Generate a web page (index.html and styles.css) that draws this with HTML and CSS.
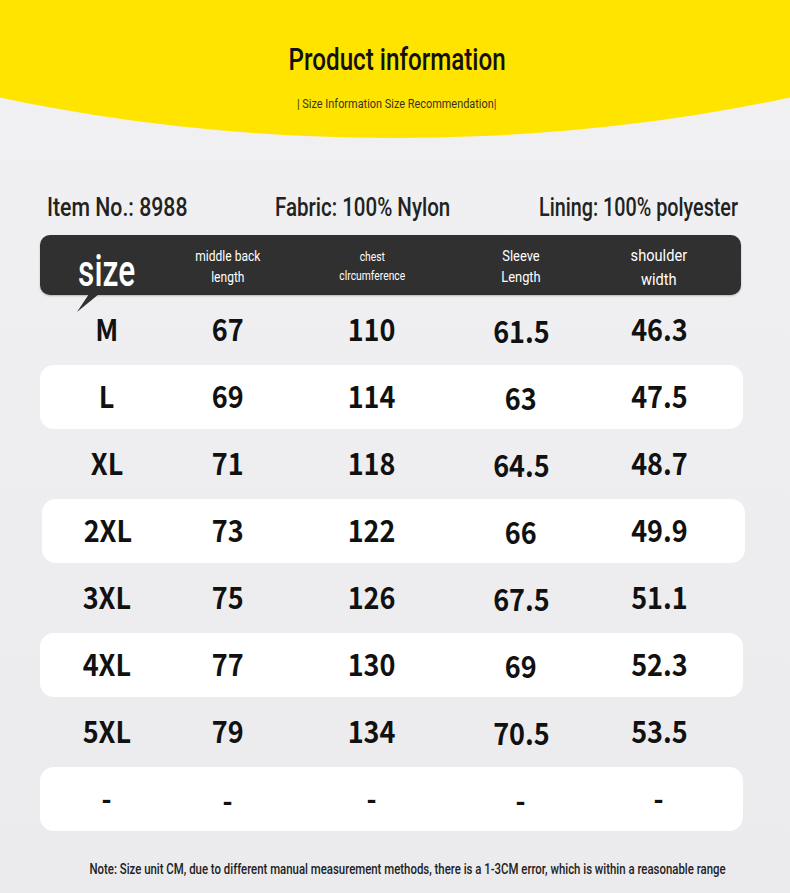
FILE: index.html
```html
<!DOCTYPE html>
<html>
<head>
<meta charset="utf-8">
<link rel="stylesheet" href="styles.css">
</head>
<body>
<div class="page">
  <header class="hero">
    <div class="hero-bg"></div>
    <h1 class="title"><span class="cond">Product information</span></h1>
    <p class="subtitle"><span class="cond">| Size Information Size Recommendation|</span></p>
  </header>

  <div class="meta">
    <div class="meta-item m1"><span class="cond-l">Item No.: 8988</span></div>
    <div class="meta-item m2"><span class="cond-l">Fabric: 100% Nylon</span></div>
    <div class="meta-item m3"><span class="cond-l">Lining: 100% polyester</span></div>
  </div>

  <div class="table">
    <div class="thead">
      <div class="th th-size"><span class="cond">size</span></div>
      <div class="th th-back"><span class="cond">middle back<br>length</span></div>
      <div class="th th-chest"><span class="cond">chest<br>clrcumference</span></div>
      <div class="th th-sleeve"><span class="cond">Sleeve<br>Length</span></div>
      <div class="th th-shoulder"><span class="cond">shoulder<br>width</span></div>
    </div>

    <div class="row"><div class="td"><span class="num">M</span></div><div class="td"><span class="num">67</span></div><div class="td"><span class="num">110</span></div><div class="td low"><span class="num">61.5</span></div><div class="td"><span class="num">46.3</span></div></div>
    <div class="row alt"><div class="td"><span class="num">L</span></div><div class="td"><span class="num">69</span></div><div class="td"><span class="num">114</span></div><div class="td low"><span class="num">63</span></div><div class="td"><span class="num">47.5</span></div></div>
    <div class="row"><div class="td"><span class="num">XL</span></div><div class="td"><span class="num">71</span></div><div class="td"><span class="num">118</span></div><div class="td low"><span class="num">64.5</span></div><div class="td"><span class="num">48.7</span></div></div>
    <div class="row alt shift"><div class="td"><span class="num">2XL</span></div><div class="td"><span class="num">73</span></div><div class="td"><span class="num">122</span></div><div class="td low"><span class="num">66</span></div><div class="td"><span class="num">49.9</span></div></div>
    <div class="row"><div class="td"><span class="num">3XL</span></div><div class="td"><span class="num">75</span></div><div class="td"><span class="num">126</span></div><div class="td low"><span class="num">67.5</span></div><div class="td"><span class="num">51.1</span></div></div>
    <div class="row alt"><div class="td"><span class="num">4XL</span></div><div class="td"><span class="num">77</span></div><div class="td"><span class="num">130</span></div><div class="td low"><span class="num">69</span></div><div class="td"><span class="num">52.3</span></div></div>
    <div class="row"><div class="td"><span class="num">5XL</span></div><div class="td"><span class="num">79</span></div><div class="td"><span class="num">134</span></div><div class="td low"><span class="num">70.5</span></div><div class="td"><span class="num">53.5</span></div></div>
    <div class="row alt"><div class="td"><span class="num">-</span></div><div class="td low"><span class="num">-</span></div><div class="td"><span class="num">-</span></div><div class="td low"><span class="num">-</span></div><div class="td"><span class="num">-</span></div></div>
  </div>

  <p class="note"><span class="cond">Note: Size unit CM, due to different manual measurement methods, there is a 1-3CM error, which is within a reasonable range</span></p>
</div>
</body>
</html>
```

FILE: styles.css
```css
* { box-sizing: border-box; }
html, body { margin: 0; padding: 0; }
body {
  background: #ededf0;
  width: 790px;
  height: 893px;
  overflow: hidden;
  font-family: Roboto, "Liberation Sans", sans-serif;
  color: #1a1a1a;
}
.page {
  position: relative;
  width: 790px;
  height: 893px;
  overflow: hidden;
  background: linear-gradient(#f1f1f3, #ebebee);
}
.cond {
  display: inline-block;
  transform: scaleX(0.72);
  transform-origin: center;
  white-space: nowrap;
}
.cond-l {
  display: inline-block;
  transform: scaleX(0.82);
  transform-origin: left center;
  white-space: nowrap;
}
.hero {
  position: relative;
  height: 190px;
  padding-top: 40px;
  text-align: center;
}
.hero-bg {
  position: absolute;
  left: -505px;
  top: -662px;
  width: 1800px;
  height: 800px;
  border-radius: 50%;
  background: #ffe400;
  z-index: 0;
}
.title {
  position: relative;
  z-index: 1;
  margin: 0;
  padding-left: 4px;
  height: 40px;
  line-height: 40px;
  font-size: 31px;
  font-weight: 500;
  color: #111;
}
.title .cond { transform: scaleX(0.78); }
.subtitle {
  position: relative;
  z-index: 1;
  margin: 16px 0 0;
  padding-left: 4px;
  line-height: 16px;
  font-size: 13px;
  color: #3a3320;
}
.subtitle .cond { transform: scaleX(0.84); }
.meta {
  height: 36px;
  display: grid;
  grid-template-columns: 47px 228px 264px 1fr;
  align-items: center;
  line-height: 36px;
  font-size: 25px;
  font-weight: 500;
  color: #222;
}
.meta-item.m1 { grid-column: 2; }
.meta-item.m2 { grid-column: 3; }
.meta-item.m3 { grid-column: 4; }
.meta-item.m1 .cond-l { transform: scaleX(0.85); }
.meta-item.m3 .cond-l { transform: scaleX(0.79); }

.table {
  margin-top: 9px;
  padding-left: 40px;
  display: flex;
  flex-direction: column;
  gap: 3px;
}
.thead {
  position: relative;
  width: 701px;
  height: 60px;
  background: #303030;
  border-radius: 10px;
  display: grid;
  grid-template-columns: 134px 108px 180px 118px 158px;
  align-items: center;
  color: #fff;
  box-shadow: 0 1px 2px rgba(0,0,0,0.25);
}
.thead::after {
  content: "";
  position: absolute;
  left: 37px;
  top: 59px;
  width: 22px;
  height: 18px;
  background: #303030;
  clip-path: polygon(0 100%, 12px 0, 100% 0);
}
.th { text-align: center; padding-top: 3px; }
.th .cond { transform: scaleX(0.86); }
.th-size { font-size: 44px; font-weight: 500; line-height: 40px; padding-top: 12px; }
.th-size .cond { transform: scaleX(0.72); }
.th-back { font-size: 14px; line-height: 21px; }
.th-chest { font-size: 12px; line-height: 19px; }
.th-sleeve { font-size: 15px; line-height: 21px; }
.th-shoulder { font-size: 17px; line-height: 24px; }

.row {
  width: 703px;
  height: 64px;
  border-radius: 14px;
  display: grid;
  grid-template-columns: 134px 108px 180px 118px 158px;
  align-items: center;
}
.row.alt { background: #fff; }
.row.shift {
  margin-left: 2px;
  grid-template-columns: 132px 108px 180px 118px 158px;
}
.td {
  text-align: center;
  line-height: 40px;
  padding-top: 3px;
}
.td.low { padding-top: 7px; }
.num {
  display: inline-block;
  font-family: "Noto Sans CJK SC", "Noto Sans", sans-serif;
  font-weight: 700;
  font-size: 30px;
  transform: scaleX(0.9);
  color: #111;
}
.note {
  margin: 28px 0 0;
  padding-left: 24px;
  display: flex;
  justify-content: center;
  line-height: 20px;
  font-size: 15px;
  font-weight: 500;
  color: #222;
}
.note .cond { transform: scaleX(0.76); flex: none; }
```
